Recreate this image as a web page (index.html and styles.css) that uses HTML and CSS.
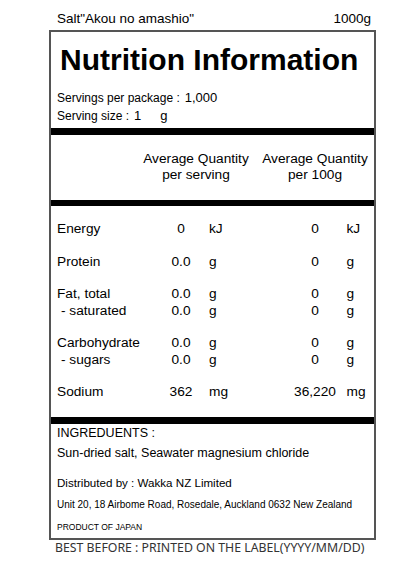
FILE: index.html
```html
<!DOCTYPE html>
<html lang="en">
  <head>
    <meta charset="UTF-8" />
    <meta name="viewport" content="width=device-width, initial-scale=1.0" />
    <title>Nutrition Information</title>
    <link rel="stylesheet" href="styles.css">
  </head>
  <body>
    <div class="page">
      <!-- Product name and weight -->
      <div class="product">
        <span>Salt"Akou no amashio"</span>
        <span>1000g</span>
      </div>

      <div class="panel">
        <!-- Title + servings -->
        <div class="intro">
          <h1>Nutrition Information</h1>
          <p class="serve">
            <span class="key">Servings per package :</span><span class="num">1,000</span>
          </p>
          <p class="serve">
            <span class="key">Serving size :</span><span class="num">1</span><span class="num unit">g</span>
          </p>
        </div>

        <!-- Column headings -->
        <div class="head">
          <div class="col-a">Average Quantity<br />per serving</div>
          <div class="col-b">Average Quantity<br />per 100g</div>
        </div>

        <!-- Nutrient rows -->
        <div class="rows">
          <div class="group">
            <div class="row"><span>Energy</span><span class="val">0</span><span class="u">kJ</span><span class="val">0</span><span class="u2">kJ</span></div>
          </div>
          <div class="group">
            <div class="row"><span>Protein</span><span class="val">0.0</span><span class="u">g</span><span class="val">0</span><span class="u2">g</span></div>
          </div>
          <div class="group">
            <div class="row"><span>Fat, total</span><span class="val">0.0</span><span class="u">g</span><span class="val">0</span><span class="u2">g</span></div>
            <div class="row"><span class="sub">- saturated</span><span class="val">0.0</span><span class="u">g</span><span class="val">0</span><span class="u2">g</span></div>
          </div>
          <div class="group">
            <div class="row"><span>Carbohydrate</span><span class="val">0.0</span><span class="u">g</span><span class="val">0</span><span class="u2">g</span></div>
            <div class="row"><span class="sub">- sugars</span><span class="val">0.0</span><span class="u">g</span><span class="val">0</span><span class="u2">g</span></div>
          </div>
          <div class="group">
            <div class="row"><span>Sodium</span><span class="val">362</span><span class="u">mg</span><span class="val">36,220</span><span class="u2">mg</span></div>
          </div>
        </div>

        <!-- Ingredients / distributor -->
        <div class="foot">
          <p class="ingr-title">INGREDUENTS :</p>
          <p class="ingr">Sun-dried salt, Seawater magnesium chloride</p>
          <p class="dist">Distributed by : Wakka NZ Limited</p>
          <p class="addr">Unit 20, 18 Airbome Road, Rosedale, Auckland 0632 New Zealand</p>
          <p class="origin">PRODUCT OF JAPAN</p>
        </div>
      </div>

      <p class="best">BEST BEFORE : PRINTED ON THE LABEL(YYYY/MM/DD)</p>
    </div>
  </body>
</html>
```

FILE: styles.css
```css
/* Global Styles */
* {
  margin: 0;
  padding: 0;
  box-sizing: border-box;
}
body {
  font-family: "Liberation Sans", Arial, sans-serif;
  background: #fff;
  color: #000;
  width: 416px;
}

.page {
  padding-top: 11px;
}

/* Product line */
.product {
  display: flex;
  justify-content: space-between;
  margin: 0 45px 0 57px;
  font-size: 13.5px;
  line-height: 16px;
}

/* Label box */
.panel {
  width: 327px;
  margin: 3px 0 0 49px;
  border: 2px solid #555;
}

.intro {
  padding: 10px 6px 3px 6px;
}

h1 {
  font-size: 30px;
  font-weight: bold;
  line-height: 36px;
  padding-left: 3px;
  margin-bottom: 11px;
}

.serve {
  font-size: 12px;
  line-height: 17px;
  white-space: nowrap;
}

.serve .num {
  font-size: 13px;
  margin-left: 5px;
}

.serve .unit {
  margin-left: 19px;
}

/* Headings */
.head {
  border-top: 7px solid #000;
  padding: 16px 0 17px;
  display: grid;
  grid-template-columns: 89px 112px 122px;
  font-size: 13.7px;
  line-height: 16px;
  text-align: center;
}

.col-a {
  grid-column: 2;
}

.col-b {
  grid-column: 3;
  padding-left: 4px;
}

/* Rows */
.rows {
  border-top: 6px solid #000;
  padding: 15px 0 16.5px 6px;
  display: flex;
  flex-direction: column;
  gap: 16px;
  font-size: 13.7px;
}

.row {
  display: grid;
  grid-template-columns: 101px 46px 80px 62px 1fr;
  line-height: 16.5px;
  white-space: nowrap;
}

.row .val {
  text-align: center;
}

.row .u {
  padding-left: 5px;
}

.row .u2 {
  padding-left: 0.5px;
}

.sub {
  padding-left: 4px;
}

/* Footer */
.foot {
  border-top: 7px solid #000;
  padding: 1px 6px 5px;
  white-space: nowrap;
}

.ingr-title,
.ingr {
  font-size: 12.5px;
  line-height: 16px;
}

.ingr {
  margin-top: 4px;
}

.dist {
  font-size: 11.6px;
  line-height: 16px;
  margin-top: 14px;
}

.addr {
  font-size: 10px;
  line-height: 14px;
  margin-top: 6.5px;
}

.origin {
  font-size: 8.5px;
  line-height: 12px;
  margin-top: 9.5px;
}

.best {
  font-family: "Noto Sans", sans-serif;
  font-size: 12.3px;
  line-height: 16px;
  color: #333;
  padding-left: 55px;
  white-space: nowrap;
}
```
